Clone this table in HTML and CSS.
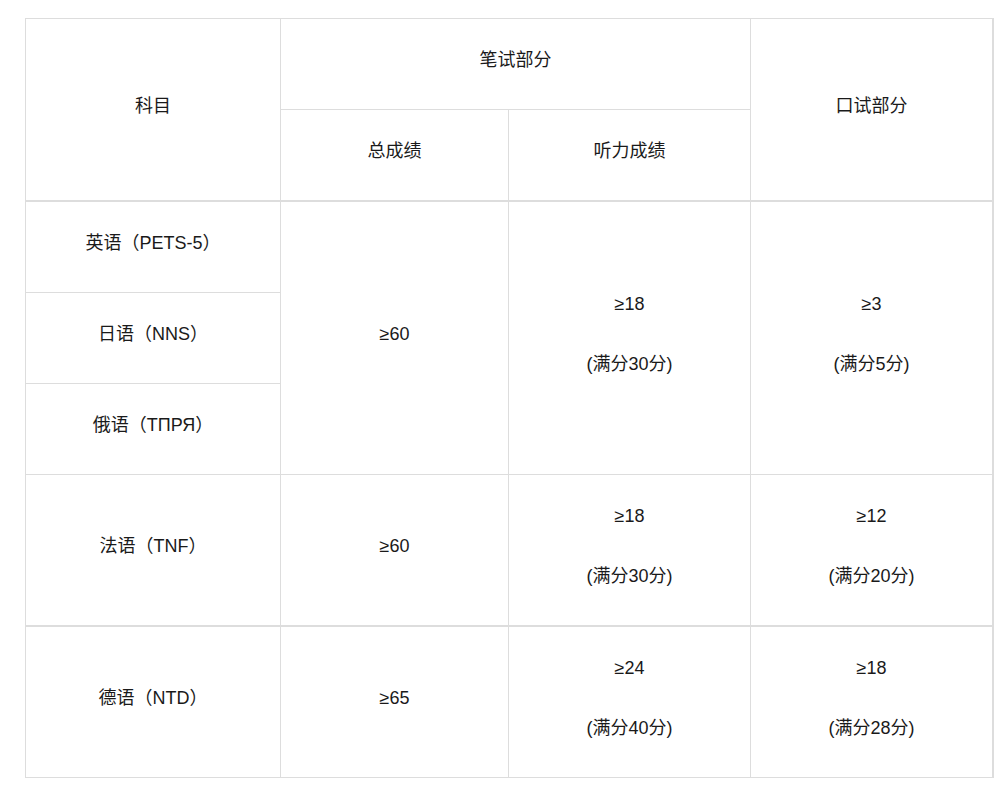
FILE: index.html
```html
<!DOCTYPE html>
<html lang="zh-CN">
<head>
<meta charset="utf-8">
<title>成绩要求</title>
<link rel="stylesheet" href="styles.css">
</head>
<body>
<table class="score-table">
  <colgroup>
    <col class="c1">
    <col class="c2">
    <col class="c3">
    <col class="c4">
  </colgroup>
  <thead>
    <tr>
      <td rowspan="2" class="head-end">科目</td>
      <td colspan="2">笔试部分</td>
      <td rowspan="2" class="head-end last">口试部分</td>
    </tr>
    <tr>
      <td class="head-end">总成绩</td>
      <td class="head-end">听力成绩</td>
    </tr>
  </thead>
  <tbody>
    <tr>
      <td>英语（PETS-5）</td>
      <td rowspan="3">≥60</td>
      <td rowspan="3">≥18<br><br>(满分30分)</td>
      <td rowspan="3" class="last">≥3<br><br>(满分5分)</td>
    </tr>
    <tr>
      <td>日语（NNS）</td>
    </tr>
    <tr>
      <td>俄语（ТПРЯ）</td>
    </tr>
    <tr class="group-end">
      <td>法语（TNF）</td>
      <td>≥60</td>
      <td>≥18<br><br>(满分30分)</td>
      <td class="last">≥12<br><br>(满分20分)</td>
    </tr>
    <tr>
      <td>德语（NTD）</td>
      <td>≥65</td>
      <td>≥24<br><br>(满分40分)</td>
      <td class="last">≥18<br><br>(满分28分)</td>
    </tr>
  </tbody>
</table>
</body>
</html>
```
FILE: styles.css
```css
html, body {
  margin: 0;
  padding: 0;
  background: #fff;
}

body {
  font-family: "Liberation Sans", "Noto Sans CJK SC", sans-serif;
  font-size: 18px;
  color: #1a1a1a;
}

.score-table {
  margin: 18px 0 0 25px;
  width: 969px;
  table-layout: fixed;
  border-collapse: separate;
  border-spacing: 0;
  border-top: 1px solid #ddd;
  border-left: 1px solid #ddd;
}

.c1 { width: 255px; }
.c2 { width: 228px; }
.c3 { width: 242px; }
.c4 { width: 243px; }

.score-table td {
  padding: 26px 0 34px;
  line-height: 30px;
  text-align: center;
  vertical-align: middle;
  border-right: 1px solid #ddd;
  border-bottom: 1px solid #ddd;
}

.score-table td.head-end,
.score-table tr.group-end td {
  border-bottom-width: 2px;
}

.score-table td.last {
  border-right-width: 2px;
}
```
